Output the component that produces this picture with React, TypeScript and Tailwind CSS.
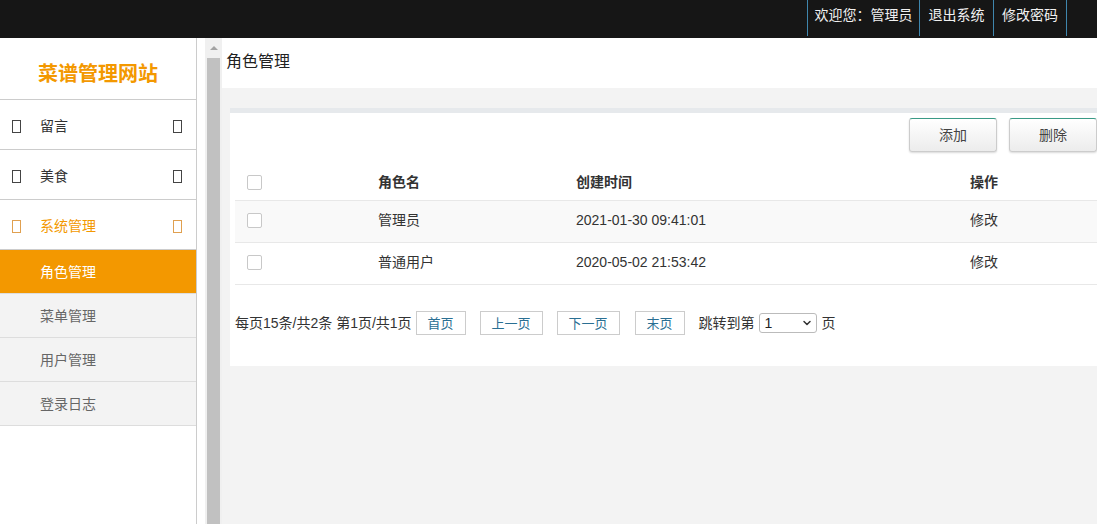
import { ChevronDown } from 'lucide-react'

const font = { fontFamily: '"Liberation Sans", "Noto Sans CJK SC", sans-serif' }

const topLinks = [
  { label: '欢迎您：管理员', w: 'w-[112px]' },
  { label: '退出系统', w: 'w-[74px]' },
  { label: '修改密码', w: 'w-[74px]' },
]

const menu = [
  { name: '留言', active: false },
  { name: '美食', active: false },
  { name: '系统管理', active: true },
]

const subMenu = ['角色管理', '菜单管理', '用户管理', '登录日志']

const rows = [
  { name: '管理员', time: '2021-01-30 09:41:01' },
  { name: '普通用户', time: '2020-05-02 21:53:42' },
]

function Tofu({ active }: { active?: boolean }) {
  return (
    <span
      className={`inline-block w-[9px] h-[13px] border ${active ? 'border-[#e0a050]' : 'border-[#444]'}`}
    />
  )
}

function Checkbox() {
  return <span className="block w-[15px] h-[15px] border border-[#c8c8c8] rounded-[2px] bg-white" />
}

function PageBtn({ label, w }: { label: string; w: string }) {
  return (
    <button className={`${w} h-[24px] border border-[#ccc] bg-white text-[13px] text-[#2a6f93] leading-none`}>
      {label}
    </button>
  )
}

export default function App() {
  return (
    <div className="w-[1097px] h-[524px] overflow-hidden flex flex-col bg-white text-[#333]" style={font}>
      {/* top bar */}
      <div className="h-[38px] shrink-0 bg-[#161616] flex justify-end pr-[30px]">
        {topLinks.map((t, i) => (
          <div
            key={t.label}
            className={`${t.w} h-[36px] border-l border-[#3f86ad] text-center text-[14px] leading-[30px] text-[#f0f0f0] ${i === 2 ? 'border-r' : ''}`}
          >
            {t.label}
          </div>
        ))}
      </div>

      <div className="flex flex-1 min-h-0">
        {/* sidebar */}
        <div className="w-[197px] shrink-0 border-r border-[#ccc] bg-white flex flex-col">
          <div className="h-[62px] border-b border-[#ccc] flex items-center justify-center pt-[10px] text-[20px] font-bold text-[#f39800]">
            菜谱管理网站
          </div>
          {menu.map((m) => (
            <div
              key={m.name}
              className={`h-[50px] border-b border-[#ccc] flex items-center pl-[12px] pr-[14px] pt-[3px] text-[14px] ${m.active ? 'text-[#f39800]' : 'text-[#333]'}`}
            >
              <Tofu active={m.active} />
              <span className="ml-[19px] flex-1">{m.name}</span>
              <Tofu active={m.active} />
            </div>
          ))}
          {subMenu.map((s, i) => (
            <div
              key={s}
              className={`h-[44px] border-b border-[#ddd] flex items-center pl-[40px] pt-[1px] text-[14px] ${i === 0 ? 'bg-[#f39800] text-white' : 'bg-[#f3f3f3] text-[#666]'}`}
            >
              {s}
            </div>
          ))}
        </div>

        {/* gap + scrollbar */}
        <div className="w-[8px] shrink-0 bg-white" />
        <div className="w-[17px] shrink-0 bg-[#f0f0f0] flex flex-col items-center">
          <div className="h-[17px] w-full flex items-center justify-center pt-[2px]">
            <span className="block w-0 h-0 border-l-[4px] border-r-[4px] border-b-[4px] border-l-transparent border-r-transparent border-b-[#a3a3a3]" />
          </div>
          <div className="w-[13px] flex-1 bg-[#c1c1c1] mt-[3px]" />
        </div>

        {/* content */}
        <div className="flex-1 min-w-0 flex flex-col bg-[#f3f3f3]">
          <div className="h-[50px] shrink-0 bg-white flex items-center pl-[4px] pb-[2px] text-[16px] text-[#222]">
            角色管理
          </div>
          <div className="pt-[20px] pl-[8px]">
            <div className="bg-white border-t-[5px] border-[#e6e9ec] h-[258px] pl-[5px]">
              <div className="flex justify-end gap-[12px] pt-[5px]">
                {['添加', '删除'].map((b) => (
                  <button
                    key={b}
                    className="w-[88px] h-[34px] rounded-[3px] border border-[#ccc] border-t-[#3a9a86] bg-gradient-to-b from-white to-[#ececec] shadow-[0_1px_2px_rgba(0,0,0,0.15)] text-[14px] text-[#444]"
                  >
                    {b}
                  </button>
                ))}
              </div>

              <div className="mt-[13px]">
                <div className="grid grid-cols-[143px_198px_394px_1fr] h-[36px] items-center border-b border-[#e8e8e8] text-[14px] font-bold text-[#333]">
                  <div className="pl-[12px]">
                    <Checkbox />
                  </div>
                  <div>角色名</div>
                  <div>创建时间</div>
                  <div>操作</div>
                </div>
                {rows.map((r, i) => (
                  <div
                    key={r.name}
                    className={`grid grid-cols-[143px_198px_394px_1fr] h-[42px] items-center border-b border-[#e8e8e8] text-[14px] text-[#333] pb-[3px] ${i === 0 ? 'bg-[#f9f9f9]' : 'bg-white'}`}
                  >
                    <div className="pl-[12px]">
                      <Checkbox />
                    </div>
                    <div>{r.name}</div>
                    <div>{r.time}</div>
                    <div>修改</div>
                  </div>
                ))}
              </div>

              <div className="flex items-center h-[24px] mt-[26px] text-[14px] text-[#333]">
                <span className="mr-[4px]">每页15条/共2条 第1页/共1页</span>
                <PageBtn label="首页" w="w-[50px]" />
                <span className="w-[14px]" />
                <PageBtn label="上一页" w="w-[63px]" />
                <span className="w-[14px]" />
                <PageBtn label="下一页" w="w-[63px]" />
                <span className="w-[15px]" />
                <PageBtn label="末页" w="w-[50px]" />
                <span className="ml-[14px]">跳转到第</span>
                <div className="ml-[4px] w-[58px] h-[20px] border border-[#bbb] rounded-[3px] bg-white flex items-center justify-between pl-[5px] pr-[3px] text-[14px] text-[#222]">
                  <span>1</span>
                  <ChevronDown size={12} strokeWidth={3} className="text-[#333]" />
                </div>
                <span className="ml-[5px]">页</span>
              </div>
            </div>
          </div>
        </div>
      </div>
    </div>
  )
}
